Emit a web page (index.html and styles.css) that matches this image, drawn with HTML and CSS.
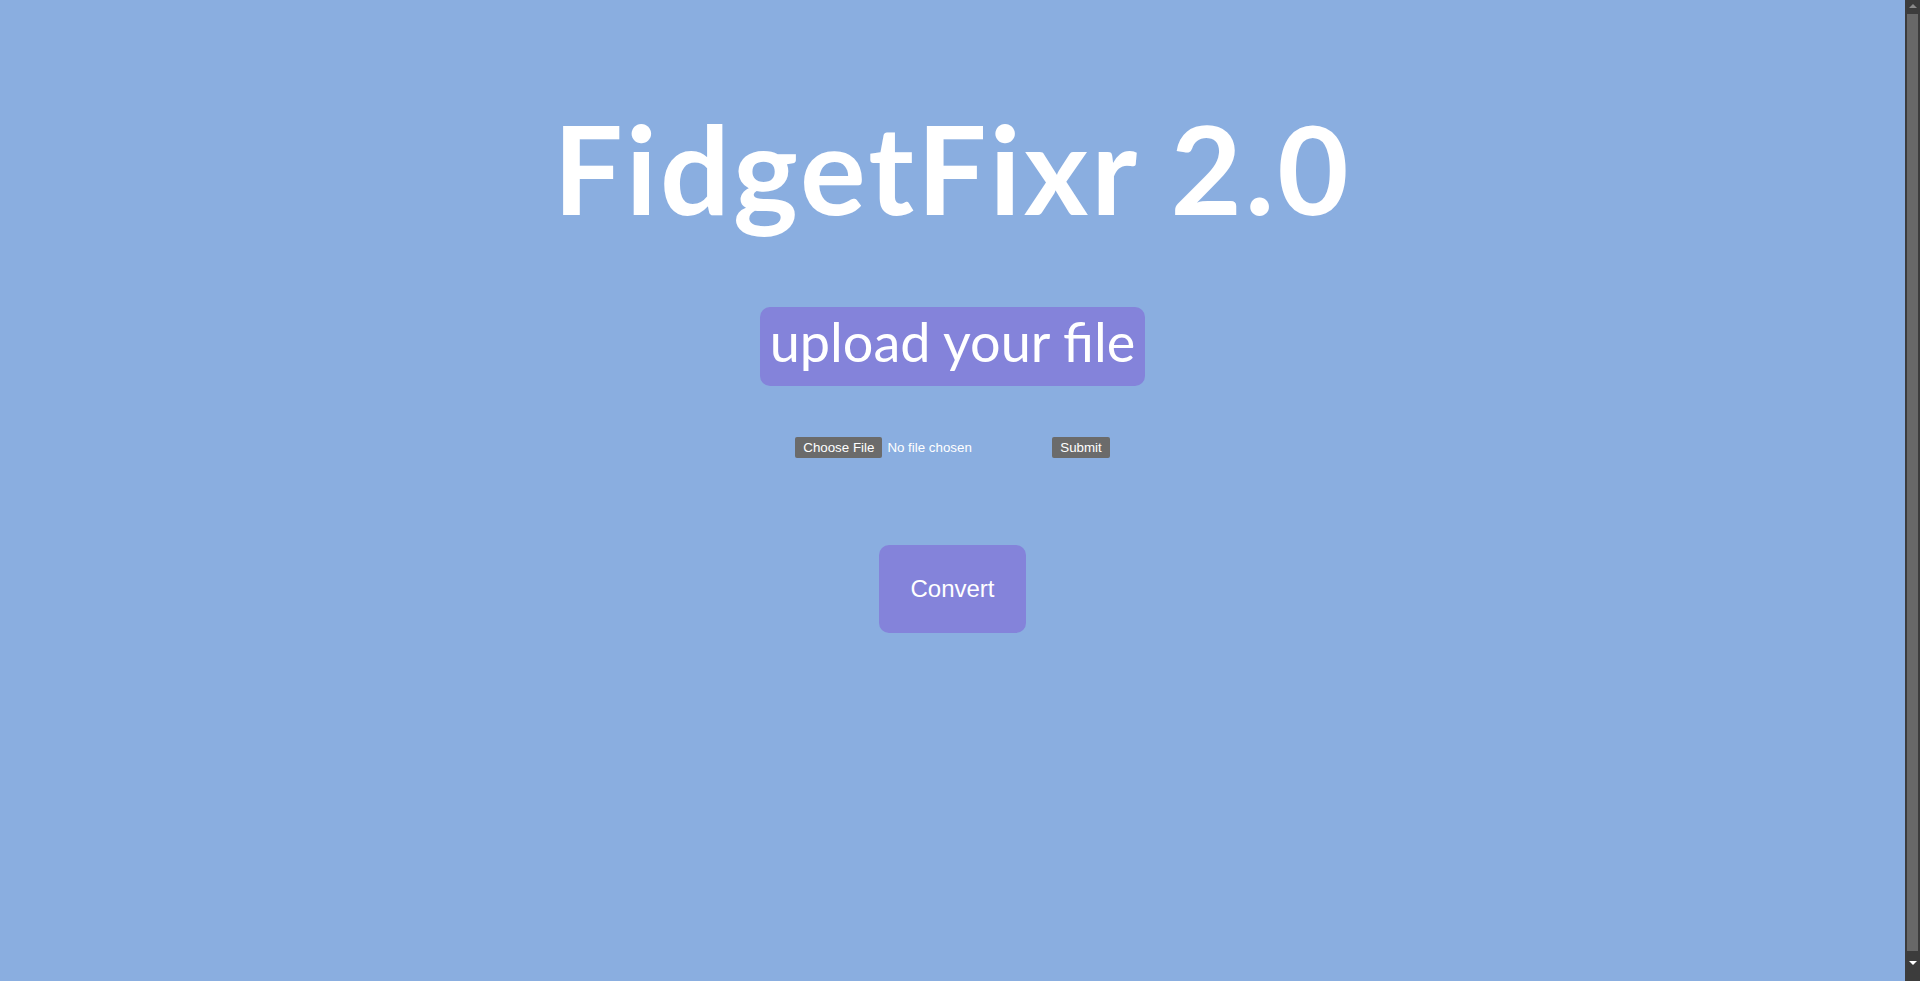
FILE: index.html
```html
<!DOCTYPE html>
<html lang="en">
<head>
<meta charset="utf-8">
<title>FidgetFixr 2.0</title>
<link rel="stylesheet" href="styles.css">
</head>
<body>
<main class="page">
  <h1 class="title">FidgetFixr 2.0</h1>
  <div class="upload-label">upload your file</div>
  <form class="upload-form">
    <input class="file-input" type="file" name="file">
    <button class="submit-btn" type="submit">Submit</button>
  </form>
  <button class="convert-btn" type="button">Convert</button>
</main>
<div class="scrollbar" aria-hidden="true">
  <span class="arrow arrow-up"></span>
  <span class="thumb"></span>
  <span class="arrow arrow-down"></span>
</div>
</body>
</html>
```
FILE: styles.css
```css
html {
  background: #8aaee0;
}
body {
  margin: 0;
  background: #8aaee0;
  font-family: "Liberation Sans", Arial, sans-serif;
}
.page {
  width: calc(100% - 15px);
  display: flex;
  flex-direction: column;
  align-items: center;
}
.title {
  margin: 93px 0 0;
  font-family: Lato, "Open Sans", sans-serif;
  font-weight: 700;
  font-size: 123px;
  line-height: 150px;
  color: #ffffff;
  letter-spacing: 3.1px;
}
.upload-label {
  margin-top: 64px;
  background: #8483da;
  color: #ffffff;
  font-family: Lato, "Open Sans", sans-serif;
  font-size: 54px;
  line-height: 69px;
  padding: 0 10px 10px;
  border-radius: 10px;
}
.upload-form {
  margin-top: 51px;
  display: flex;
  align-items: center;
  gap: 4px;
}
.file-input {
  width: 253px;
  color: #ffffff;
  font-family: "Liberation Sans", Arial, sans-serif;
  font-size: 13.33px;
}
.file-input::file-selector-button {
  background: #6b6b6b;
  color: #ffffff;
  border: none;
  border-radius: 2px;
  padding: 3px 8px;
  margin-right: 5px;
  font-family: "Liberation Sans", Arial, sans-serif;
  font-size: 13.33px;
}
.submit-btn {
  background: #6b6b6b;
  color: #ffffff;
  border: none;
  border-radius: 2px;
  padding: 3px 8px;
  font-family: "Liberation Sans", Arial, sans-serif;
  font-size: 13.33px;
}
.convert-btn {
  margin-top: 87px;
  background: #8483da;
  color: #ffffff;
  border: none;
  border-radius: 10px;
  padding: 30px 31px;
  font-family: "Liberation Sans", Arial, sans-serif;
  font-size: 24px;
}
.scrollbar {
  position: fixed;
  top: 0;
  right: 0;
  width: 15px;
  height: 100%;
  background: #3c3c3c;
  display: flex;
  flex-direction: column;
  align-items: center;
}
.arrow {
  width: 0;
  height: 0;
  border-left: 4px solid transparent;
  border-right: 4px solid transparent;
}
.arrow-up {
  margin-top: 4px;
  border-bottom: 4px solid #8a8a8a;
}
.arrow-down {
  margin-top: 10px;
  border-top: 4px solid #ffffff;
}
.thumb {
  margin-top: 6px;
  width: 11px;
  height: 937px;
  background: #686868;
}
```
